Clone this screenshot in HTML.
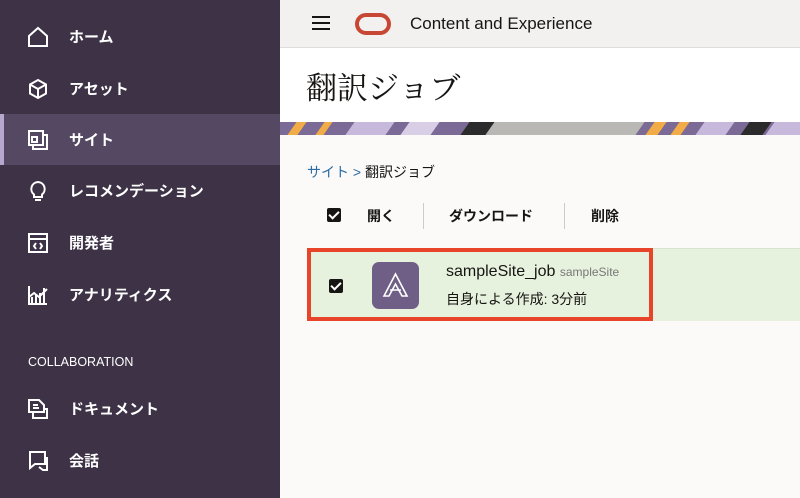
<!DOCTYPE html>
<html><head><meta charset="utf-8"><style>
*{margin:0;padding:0;box-sizing:border-box}
body{width:800px;height:498px;overflow:hidden;position:relative;background:#fbfaf9;font-family:"Liberation Sans","Noto Sans CJK JP",sans-serif}
#sb{position:absolute;left:0;top:0;width:280px;height:498px;background:#3d3246}
.it{position:absolute;left:0;width:280px;height:51px;color:#fff;font-weight:bold;font-size:15px;display:flex;align-items:center}
.it svg{position:absolute;left:27px;width:22px;height:22px}
.it span{position:absolute;left:69px}
.act{background:#544863}
.act:before{content:"";position:absolute;left:0;top:0;width:4px;height:51px;background:#b7a7cf}
#hdr{position:absolute;left:280px;top:0;width:520px;height:48px;background:#f2f1ef;border-bottom:1px solid #ddd}
#title{position:absolute;left:280px;top:48px;width:520px;height:74px;background:#fff}
#ban{position:absolute;left:280px;top:122px;width:520px;height:13px;overflow:hidden;background:#7b6a96}
#ban div{position:absolute;top:0;height:13px;transform:skewX(-35deg)}
.cb{position:absolute;width:14px;height:14px;background:#161513;border-radius:2px}
.cb:after{content:"";position:absolute;left:4px;top:1px;width:4px;height:8px;border:solid #fff;border-width:0 2px 2px 0;transform:rotate(45deg)}
</style></head><body>
<div id="sb">
<div class="it" style="top:11px"><svg viewBox="0 0 22 22" fill="none" stroke="#fff" stroke-width="2"><path d="M2 10L11 2L20 10V20H2Z"/></svg><span>ホーム</span></div>
<div class="it" style="top:63px"><svg viewBox="0 0 22 22" fill="none" stroke="#fff" stroke-width="2"><path d="M11 2L19 6.5V15.5L11 20L3 15.5V6.5Z M3 6.5L11 11L19 6.5 M11 11V20"/></svg><span>アセット</span></div>
<div class="it act" style="top:114px"><svg viewBox="0 0 22 22" fill="none" stroke="#fff" stroke-width="2"><path d="M2 2H16V16H2Z M6 16V20H20V6H16 M5 8H10V13H5Z"/></svg><span>サイト</span></div>
<div class="it" style="top:165px"><svg viewBox="0 0 22 22" fill="none" stroke="#fff" stroke-width="2"><path d="M11 2A7 7 0 0 1 15 14.5V17H7V14.5A7 7 0 0 1 11 2Z M8 20H14"/></svg><span>レコメンデーション</span></div>
<div class="it" style="top:217px"><svg viewBox="0 0 22 22" fill="none" stroke="#fff" stroke-width="2"><path d="M2 2H20V20H2Z M2 7H20 M9 11L7 14L9 17 M13 11L15 14L13 17"/></svg><span>開発者</span></div>
<div class="it" style="top:269px"><svg viewBox="0 0 22 22" fill="none" stroke="#fff" stroke-width="2"><path d="M2 2V20H20 M5 19V13 M9 19V11 M13 19V9 M17 19V4 M2 13L7 9L12 13L20 5"/></svg><span>アナリティクス</span></div>
<div style="position:absolute;left:28px;top:355px;color:#fff;font-size:12.5px">COLLABORATION</div>
<div class="it" style="top:383px"><svg viewBox="0 0 22 22" fill="none" stroke="#fff" stroke-width="2"><path d="M2 2H12L17 7V14H2Z M6 7H11 M6 10H12 M17 11H20V20H6V14"/></svg><span>ドキュメント</span></div>
<div class="it" style="top:435px"><svg viewBox="0 0 22 22" fill="none" stroke="#fff" stroke-width="2"><path d="M2 2H18V14H8L3 18V2 M18 8H20V20H16L12 17"/></svg><span>会話</span></div>
</div>
<div id="hdr">
<svg style="position:absolute;left:32px;top:16px" width="18" height="14"><path d="M0 1H18M0 7H18M0 13H18" stroke="#161513" stroke-width="2"/></svg>
<div style="position:absolute;left:75px;top:13px;width:36px;height:22px;border:4px solid #c74634;border-radius:11px"></div>
<div style="position:absolute;left:130px;top:14px;font-size:17px;color:#161513">Content and Experience</div>
</div>
<div id="title"><div style="position:absolute;left:26px;top:15px;font-size:31px;font-family:'Noto Serif CJK SC',serif;color:#161513">翻訳ジョブ</div></div>
<div id="ban">
<div style="left:12px;width:10px;background:#f1ac47"></div>
<div style="left:40px;width:8px;background:#f1ac47"></div>
<div style="left:70px;width:40px;background:#c6b9dc"></div>
<div style="left:125px;width:30px;background:#d8cfe6"></div>
<div style="left:185px;width:25px;background:#2b2b2b"></div>
<div style="left:210px;width:150px;background:#b9b8b4"></div>
<div style="left:370px;width:12px;background:#f1ac47"></div>
<div style="left:395px;width:10px;background:#f1ac47"></div>
<div style="left:420px;width:30px;background:#c6b9dc"></div>
<div style="left:465px;width:22px;background:#2b2b2b"></div>
<div style="left:490px;width:40px;background:#c6b9dc"></div>
</div>
<div style="position:absolute;left:307px;top:162px;font-size:14px;color:#161513"><span style="color:#2b6ca3">サイト</span> <span style="color:#2b6ca3">&gt;</span> 翻訳ジョブ</div>
<div class="cb" style="left:327px;top:208px"></div>
<div style="position:absolute;left:367px;top:206px;font-size:14px;font-weight:bold;color:#161513">開く</div>
<div style="position:absolute;left:423px;top:203px;width:1px;height:26px;background:#ccc"></div>
<div style="position:absolute;left:449px;top:206px;font-size:14px;font-weight:bold;color:#161513">ダウンロード</div>
<div style="position:absolute;left:564px;top:203px;width:1px;height:26px;background:#ccc"></div>
<div style="position:absolute;left:591px;top:206px;font-size:14px;font-weight:bold;color:#161513">削除</div>
<div style="position:absolute;left:307px;top:248px;width:493px;height:73px;background:#e7f2de;border-top:1px solid #d8e4ce"></div>
<div style="position:absolute;left:307px;top:248px;width:346px;height:73px;border:4px solid #e8442a"></div>
<div class="cb" style="left:329px;top:279px"></div>
<div style="position:absolute;left:372px;top:262px;width:47px;height:47px;background:#6f5f86;border-radius:7px"><svg width="47" height="47" viewBox="0 0 47 47" fill="none" stroke="#fff" stroke-width="1.6"><path d="M12 34L23.5 12L35 34L30 34L23.5 22L17 34Z M18 28H29"/></svg></div>
<div style="position:absolute;left:446px;top:263px;font-size:16px;color:#161513">sampleSite_job <span style="font-size:12px;color:#777">sampleSite</span></div>
<div style="position:absolute;left:446px;top:289px;font-size:14px;color:#161513">自身による作成: 3分前</div>
</body></html>
